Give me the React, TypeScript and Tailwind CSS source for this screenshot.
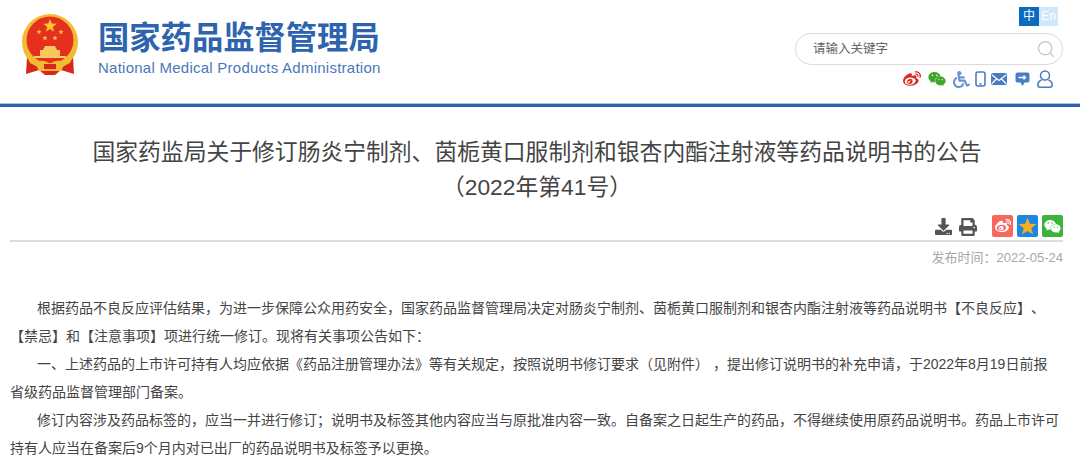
import React from 'react';
import { Search } from 'lucide-react';
import { FaWeibo, FaWeixin, FaWheelchair, FaDownload, FaPrint } from 'react-icons/fa';

const Star = ({ x, y, r, fill = '#f6c634' }: { x: number; y: number; r: number; fill?: string }) => {
  const pts = Array.from({ length: 10 }, (_, i) => {
    const a = (Math.PI / 5) * i - Math.PI / 2;
    const d = i % 2 === 0 ? r : r * 0.42;
    return `${(x + d * Math.cos(a)).toFixed(2)},${(y + d * Math.sin(a)).toFixed(2)}`;
  });
  return <polygon points={pts.join(' ')} fill={fill} />;
};

const Emblem = () => (
  <svg width="58" height="62" viewBox="0 0 58 62" className="shrink-0">
    <path d="M6 43 L5 60 L18 56 L24 61 L34 61 L40 56 L53 60 L52 43 Z" fill="#d8281c" />
    <circle cx="29" cy="28" r="28" fill="#f2bb32" />
    <circle cx="29" cy="26" r="23.500" fill="#e6301f" />
    <Star x={29} y={12} r={7} />
    <Star x={18} y={18} r={2.700} />
    <Star x={40} y={18} r={2.700} />
    <Star x={24} y={24} r={2.700} />
    <Star x={34} y={24} r={2.700} />
    <path d="M22 36 L24 32 H34 L36 36 Z" fill="#f7c95a" />
    <rect x="19" y="36" width="20" height="6" fill="#f7c95a" />
    <rect x="13" y="42" width="32" height="2" fill="#f7c95a" />
    <path d="M6 42 Q29 56 52 42 L49 49 Q29 60 9 49 Z" fill="#f2bb32" />
    <path d="M14 49 Q22 44 29 50 Q36 44 44 49 L40 57 H18 Z" fill="#f2bb32" />
    <rect x="23" y="50" width="12" height="5" fill="#d8281c" />
  </svg>
);

const PhoneIcon = () => (
  <svg width="11" height="16" viewBox="0 0 11 16" fill="none" stroke="#4a7cc6" strokeWidth="1.600">
    <rect x="1" y="1" width="9" height="14" rx="2" />
    <path d="M4.500 13 H6.500" />
  </svg>
);

const MailIcon = () => (
  <svg width="16" height="12" viewBox="0 0 16 12">
    <rect width="16" height="12" rx="2" fill="#4a7cc6" />
    <path d="M1 2 L8 7.500 L15 2 M1 10.500 L5.500 6 M15 10.500 L10.500 6" fill="none" stroke="#fff" strokeWidth="1.200" />
  </svg>
);

const ChatIcon = () => (
  <svg width="15" height="15" viewBox="0 0 15 15">
    <path d="M2.500 0.500 H12.500 Q14.500 0.500 14.500 2.500 V8.500 Q14.500 10.500 12.500 10.500 H9.500 L7.500 14 L5.500 10.500 H2.500 Q0.500 10.500 0.500 8.500 V2.500 Q0.500 0.500 2.500 0.500 Z" fill="#4a7cc6" />
    <path d="M3.500 5.500 H10.500 M8.500 3.500 L10.500 5.500 L8.500 7.500" fill="none" stroke="#fff" strokeWidth="1.300" />
  </svg>
);

const UserIcon = () => (
  <svg width="16" height="18" viewBox="0 0 16 18" fill="none" stroke="#4a7cc6" strokeWidth="1.500">
    <circle cx="8" cy="5.500" r="4.500" />
    <path d="M4.500 10 Q0.800 11.500 0.800 15 Q0.800 17.200 3 17.200 H13 Q15.200 17.200 15.200 15 Q15.200 11.500 11.500 10" />
  </svg>
);

const Paragraph = ({ children }: { children: React.ReactNode }) => (
  <p className="indent-[27px]">{children}</p>
);

export default function App() {
  return (
    <div className="w-[1080px] h-[460px] overflow-hidden bg-white [text-spacing-trim:space-all] font-['Liberation_Sans','Noto_Sans_CJK_SC',sans-serif]">
      <header className="h-[103px] flex justify-between pl-[21px] pr-[17px]">
        <div className="flex items-start pt-[14px] gap-[19px]">
          <Emblem />
          <div className="pt-[6px]">
            <h1 className="text-[31.3px] leading-[38px] font-bold text-[#2e64ae] whitespace-nowrap">国家药品监督管理局</h1>
            <p className="text-[15px] leading-[18px] mt-[1px] text-[#4a78b8] tracking-[0.25px] whitespace-nowrap">National Medical Products Administration</p>
          </div>
        </div>
        <div className="w-[268px] flex flex-col items-end pt-[7px]">
          <div className="flex h-[19px] mr-[5px] text-[12px] leading-[19px] text-center text-white">
            <span className="w-5 bg-[#0a6cbf]">中</span>
            <span className="w-[19px] bg-[#cfe6fb]">En</span>
          </div>
          <div className="mt-[7px] w-[268px] h-[32px] rounded-full border-[1.5px] border-[#dcdcdc] flex items-center justify-between pl-[17px] pr-[6px] text-[12.500px] text-[#666]">
            <span>请输入关键字</span>
            <Search size={20} strokeWidth={1.500} color="#c4c4c4" />
          </div>
          <div className="mt-[5px] mr-[10px] flex items-center h-[18px]">
            <FaWeibo size={18} color="#dd2b22" />
            <FaWeixin size={18} color="#3fa62a" className="ml-[7px]" />
            <FaWheelchair size={17} color="#6b93d0" className="ml-[7px]" />
            <span className="ml-[5px]"><PhoneIcon /></span>
            <span className="ml-[5px]"><MailIcon /></span>
            <span className="ml-[8px]"><ChatIcon /></span>
            <span className="ml-[7px]"><UserIcon /></span>
          </div>
        </div>
      </header>
      <div className="h-[4px] bg-[#2c5fb0] border-t border-[#a9c3e6]" />

      <main className="px-[10px]">
        <h2 className="mt-[28px] w-[1054px] text-[22.800px] leading-[35px] text-[#444] text-center">
          国家药监局关于修订肠炎宁制剂、茵栀黄口服制剂和银杏内酯注射液等药品说明书的公告
          <br />
          （2022年第41号）
        </h2>

        <div className="mt-[10px] w-[1053px] h-[27px] border-b-2 border-[#dedede] flex justify-end items-start">
          <FaDownload size={17} color="#555" className="mr-[7px] mt-[3px]" />
          <FaPrint size={18} color="#555" className="mr-[15px] mt-[3px]" />
          <span className="w-[21px] h-[22px] rounded-[2px] bg-[#f4685e] flex items-center justify-center">
            <FaWeibo size={16} color="#fff" />
          </span>
          <span className="ml-[4px] w-[21px] h-[22px] rounded-[2px] bg-[#1b87e0] flex items-center justify-center">
            <svg width="19" height="19" viewBox="0 0 24 24">
              <Star x={12} y={12.500} r={12} fill="#f5b021" />
            </svg>
          </span>
          <span className="ml-[4px] w-[21px] h-[22px] rounded-[2px] bg-[#3cb43c] flex items-center justify-center">
            <FaWeixin size={17} color="#fff" />
          </span>
        </div>

        <div className="w-[1053px] text-right text-[13px] leading-[18px] text-[#a8a8a8] mt-[7px]">发布时间：2022-05-24</div>

        <div className="mt-[27px] w-[1051px] text-[14px] leading-[28px] text-[#444]">
          <Paragraph>根据药品不良反应评估结果，为进一步保障公众用药安全，国家药品监督管理局决定对肠炎宁制剂、茵栀黄口服制剂和银杏内酯注射液等药品说明书【不良反应】、【禁忌】和【注意事项】项进行统一修订。现将有关事项公告如下：</Paragraph>
          <Paragraph>一、上述药品的上市许可持有人均应依据《药品注册管理办法》等有关规定，按照说明书修订要求（见附件） ，提出修订说明书的补充申请，于2022年8月19日前报省级药品监督管理部门备案。</Paragraph>
          <Paragraph>修订内容涉及药品标签的，应当一并进行修订；说明书及标签其他内容应当与原批准内容一致。自备案之日起生产的药品，不得继续使用原药品说明书。药品上市许可持有人应当在备案后9个月内对已出厂的药品说明书及标签予以更换。</Paragraph>
        </div>
      </main>
    </div>
  );
}
